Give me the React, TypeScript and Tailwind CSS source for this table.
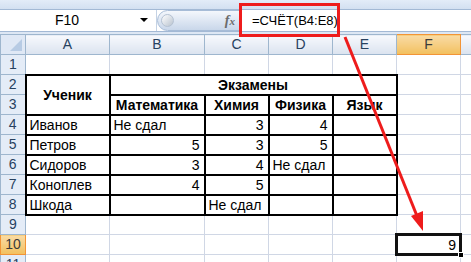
import React from "react";

type Cell = {
  text?: string;
  align?: "left" | "right" | "center";
  bold?: boolean;
  table?: boolean;
  colSpan?: number;
  rowSpan?: number;
};

const COLS = ["A", "B", "C", "D", "E", "F", "G"];
const WIDTHS = [25, 84, 95, 64, 64, 64, 64, 64];

const t = (text = "", align: Cell["align"] = "left", bold = false): Cell => ({
  text,
  align,
  bold,
  table: true,
});
const empty: Cell = {};

// rows 1..11, each row lists the cells for columns A..G
const rows: Cell[][] = [
  [empty, empty, empty, empty, empty, empty, empty],
  [
    { ...t("Ученик", "center", true), rowSpan: 2 },
    { ...t("Экзамены", "center", true), colSpan: 4 },
    empty,
    empty,
  ],
  [t("Математика", "center", true), t("Химия", "center", true), t("Физика", "center", true), t("Язык", "center", true), empty, empty],
  [t("Иванов"), t("Не сдал"), t("3", "right"), t("4", "right"), t(), empty, empty],
  [t("Петров"), t("5", "right"), t("3", "right"), t("5", "right"), t(), empty, empty],
  [t("Сидоров"), t("3", "right"), t("4", "right"), t("Не сдал"), t(), empty, empty],
  [t("Коноплев"), t("4", "right"), t("5", "right"), t(), t(), empty, empty],
  [t("Шкода"), t(), t("Не сдал"), t(), t(), empty, empty],
  [empty, empty, empty, empty, empty, empty, empty],
  [empty, empty, empty, empty, empty, { text: "9", align: "right" }, empty],
  [empty, empty, empty, empty, empty, empty, empty],
];

function FormulaBar() {
  return (
    <div className="flex h-[22px] border-t border-[#a3b9d5] bg-white">
      <div className="relative flex w-[157px] items-center justify-center border-r border-[#c5d3e5]">
        <span className="pr-[22px] text-[14px] text-black">F10</span>
        <span className="absolute right-[8px] top-[8px] h-0 w-0 border-x-[4px] border-t-[4px] border-x-transparent border-t-black" />
      </div>
      <div className="flex w-[84px] items-center justify-between rounded-l-[11px] border border-[#a7bcd7] bg-gradient-to-b from-[#f4f7fc] to-[#c9d7ea] pl-[3px] pr-[5px]">
        <span className="h-[13px] w-[13px] rounded-full border border-[#b5c2d3] bg-gradient-to-br from-white to-[#b9c3cf]" />
        <span className="font-['Liberation_Serif'] text-[14px] font-bold italic text-[#6b6b6b]">
          f<span className="text-[11px]">x</span>
        </span>
      </div>
      <div className="flex flex-1 items-center pl-[11px] text-[13px] text-black">=СЧЁТ(B4:E8)</div>
    </div>
  );
}

function ColumnHeader({ label, active }: { label: string; active?: boolean }) {
  return (
    <th
      className={
        active
          ? "border border-[#f29436] bg-gradient-to-b from-[#f9dba4] to-[#f2c05c] p-0 text-center text-[14px] font-normal leading-[15px] text-[#3a3a3a]"
          : "border border-[#9eb6ce] bg-gradient-to-b from-[#f7f9fd] to-[#dbe3ef] p-0 text-center text-[14px] font-normal leading-[15px] text-[#27415f]"
      }
    >
      {label}
    </th>
  );
}

function RowHeader({ n }: { n: number }) {
  const active = n === 10;
  return (
    <td
      className={
        active
          ? "border border-[#f29436] bg-gradient-to-b from-[#f9dba4] to-[#f2c05c] p-0 text-center text-[14px] leading-[15px] text-[#3a3a3a]"
          : "border border-[#9eb6ce] bg-[#e4ecf7] p-0 text-center text-[14px] leading-[15px] text-[#27415f]"
      }
    >
      {n}
    </td>
  );
}

function SheetCell({ cell, selected }: { cell: Cell; selected?: boolean }) {
  const align =
    cell.align === "right" ? "text-right pr-[4px]" : cell.align === "center" ? "text-center" : "text-left pl-[3px]";
  const border = cell.table ? "border-2 border-black" : "border border-[#d0d7e5]";
  return (
    <td
      colSpan={cell.colSpan}
      rowSpan={cell.rowSpan}
      className={`relative whitespace-nowrap p-0 pt-[2px] text-[14px] leading-[15px] text-black ${align} ${border} ${
        cell.bold ? "font-bold" : ""
      }`}
    >
      {cell.text}
      {selected && (
        <span className="pointer-events-none absolute inset-[-2px] border-[3px] border-[#111]">
          <span className="absolute bottom-[-5px] right-[-5px] h-[6px] w-[6px] border border-white bg-black" />
        </span>
      )}
    </td>
  );
}

export default function App() {
  return (
    <div className="relative h-[262px] w-[471px] overflow-hidden bg-white font-['Liberation_Sans',Arial,sans-serif]">
      <div className="h-[9px] bg-gradient-to-b from-[#e3ecf8] to-[#d3e0f1]" />
      <FormulaBar />
      <div className="h-[3px] border-t border-[#a3b9d5] bg-[#dde7f4]" />

      <table className="table-fixed border-collapse" style={{ width: WIDTHS.reduce((a, b) => a + b, 0) }}>
        <colgroup>
          {WIDTHS.map((w, i) => (
            <col key={i} style={{ width: w }} />
          ))}
        </colgroup>
        <thead>
          <tr className="h-[20px]">
            <th className="relative border border-[#9eb6ce] bg-[#dfe8f5] p-0">
              <span className="absolute bottom-[3px] right-[3px] h-0 w-0 border-b-[12px] border-l-[12px] border-b-[#b7cbe4] border-l-transparent" />
            </th>
            {COLS.map((c) => (
              <ColumnHeader key={c} label={c} active={c === "F"} />
            ))}
          </tr>
        </thead>
        <tbody>
          {rows.map((cells, r) => (
            <tr key={r} className="h-[20px]">
              <RowHeader n={r + 1} />
              {cells.map((cell, c) => (
                <SheetCell key={c} cell={cell} selected={r === 9 && c === 5} />
              ))}
            </tr>
          ))}
        </tbody>
      </table>

      {/* callout: formula box and arrow to the result cell */}
      <div className="pointer-events-none absolute left-[239px] top-[3px] h-[34px] w-[101px] border-[3px] border-[#ee1c1c]" />
      <svg className="pointer-events-none absolute inset-0" width={471} height={262}>
        <line x1={345} y1={37} x2={417} y2={216} stroke="#ee1c1c" strokeWidth={3} />
        <polygon points="423,231 411,216 423,211" fill="#ee1c1c" />
      </svg>
    </div>
  );
}
